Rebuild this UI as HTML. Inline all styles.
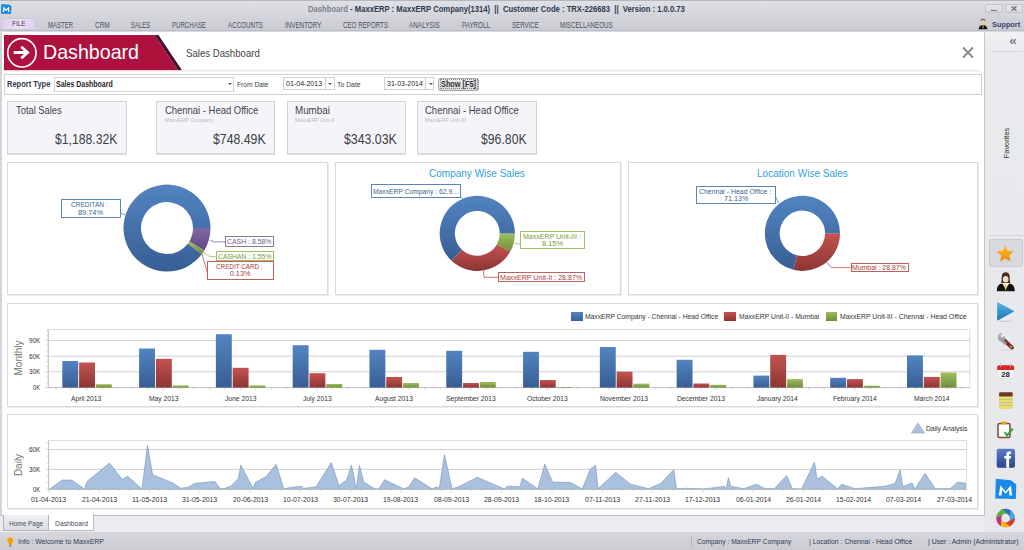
<!DOCTYPE html><html><head><meta charset="utf-8"><style>
*{margin:0;padding:0;box-sizing:border-box}
html,body{width:1024px;height:550px;overflow:hidden;background:#d4d5da;font-family:"Liberation Sans",sans-serif}
.a{position:absolute}
.nw{white-space:nowrap}
#title{left:0;top:0;width:1024px;height:17px;background:linear-gradient(#b6b7bd 0,#b6b7bd 1px,#dfe0e5 1.5px,#d3d4da 17px)}
#ribbon{left:0;top:17px;width:1024px;height:15px;background:linear-gradient(#d3d4da,#cbccd3 13px,#bdbec4 13px,#bdbec4 14px,#d9dadf 14px)}
#content{left:1.5px;top:32px;width:982.5px;height:482.5px;background:#fff;box-shadow:1px 1px 1px #c4c5ca}
#side{left:985px;top:32px;width:39px;height:500px;background:linear-gradient(#f1f1f4,#e9eaed 22px,#e7e8eb)}
#tabstrip{left:0;top:515px;width:985px;height:17px;background:linear-gradient(#bcbdc2 0,#bcbdc2 1px,#ebecef 1px)}
#status{left:0;top:532px;width:1024px;height:18px;background:linear-gradient(#d6d7dc,#cbccd2)}
.card{background:#f5f5f9;border:1px solid #d3d3d8;box-shadow:0 1px 0 #e2e2e6}
.panel{background:#fff;border:1px solid #dadadd;box-shadow:1px 1px 0 #ececef}
</style></head><body><div id="title" class="a"></div><div id="ribbon" class="a"></div><div id="content" class="a"></div><div id="side" class="a"></div><div id="tabstrip" class="a"></div><div id="status" class="a"></div><svg class="a" style="left:0;top:3px" width="13" height="12" viewBox="0 0 13 12"><path d="M1.2 1 L10 1.8 L11.6 4 L11 11 L1 10.8 Z" fill="#1e88e0"/><path d="M2.6 9 L3.6 3.4 L6.2 6.6 L8.8 3.6 L9.6 9 L8.2 9 L7.8 6.2 L6.2 8.2 L4.5 6.2 L4 9 Z" fill="#fff"/></svg><div class="a nw" style="left:307.80px;top:5px;font-size:8.43px;line-height:8.43px;color:#2e3950;font-weight:bold;transform:scaleX(0.9083);transform-origin:0 0;"><span style="color:#7b808c">Dashboard</span> - MaxxERP : MaxxERP Company(1314)&nbsp; ||&nbsp; Customer Code : TRX-226683&nbsp; ||&nbsp; Version : 1.0.0.73</div><div class="a" style="left:985px;top:4px;width:18px;height:9px;border:1px solid #c2c3c8;border-radius:2px;background:linear-gradient(#e6e7ea,#d8d9dd)"></div><div class="a" style="left:991px;top:9.5px;width:6px;height:1.3px;background:#6d7079"></div><div class="a" style="left:1005px;top:4px;width:18px;height:9px;border:1px solid #c2c3c8;border-radius:2px;background:linear-gradient(#e6e7ea,#d8d9dd)"></div><svg class="a" style="left:1011px;top:6px" width="6" height="5" viewBox="0 0 6 5"><path d="M0.5 0.3 L5.5 4.7 M5.5 0.3 L0.5 4.7" stroke="#6d7079" stroke-width="1.4"/></svg><div class="a" style="left:2px;top:17.5px;width:34px;height:12px;border:1px solid #cdc7dc;background:linear-gradient(100deg,#dcd3f0,#efdff6 50%,#ddcff0)"></div><div class="a nw" style="left:11.70px;top:20px;font-size:7.85px;line-height:7.85px;color:#3d4150;transform:scaleX(0.8150);transform-origin:0 0;">FILE</div><div class="a nw" style="left:47.80px;top:22px;font-size:8.14px;line-height:8.14px;color:#4a4f5c;transform:scaleX(0.7433);transform-origin:0 0;">MASTER</div><div class="a nw" style="left:94.60px;top:22px;font-size:8.14px;line-height:8.14px;color:#4a4f5c;transform:scaleX(0.7938);transform-origin:0 0;">CRM</div><div class="a nw" style="left:130.80px;top:22px;font-size:8.14px;line-height:8.14px;color:#4a4f5c;transform:scaleX(0.7314);transform-origin:0 0;">SALES</div><div class="a nw" style="left:171.80px;top:22px;font-size:8.14px;line-height:8.14px;color:#4a4f5c;transform:scaleX(0.7497);transform-origin:0 0;">PURCHASE</div><div class="a nw" style="left:227.70px;top:22px;font-size:8.14px;line-height:8.14px;color:#4a4f5c;transform:scaleX(0.7643);transform-origin:0 0;">ACCOUNTS</div><div class="a nw" style="left:284.60px;top:22px;font-size:8.14px;line-height:8.14px;color:#4a4f5c;transform:scaleX(0.7710);transform-origin:0 0;">INVENTORY</div><div class="a nw" style="left:342.60px;top:22px;font-size:8.14px;line-height:8.14px;color:#4a4f5c;transform:scaleX(0.7632);transform-origin:0 0;">CEO REPORTS</div><div class="a nw" style="left:409.10px;top:22px;font-size:8.14px;line-height:8.14px;color:#4a4f5c;transform:scaleX(0.7858);transform-origin:0 0;">ANALYSIS</div><div class="a nw" style="left:461.80px;top:22px;font-size:8.14px;line-height:8.14px;color:#4a4f5c;transform:scaleX(0.7676);transform-origin:0 0;">PAYROLL</div><div class="a nw" style="left:511.70px;top:22px;font-size:8.14px;line-height:8.14px;color:#4a4f5c;transform:scaleX(0.7562);transform-origin:0 0;">SERVICE</div><div class="a nw" style="left:560.00px;top:22px;font-size:8.14px;line-height:8.14px;color:#4a4f5c;transform:scaleX(0.7612);transform-origin:0 0;">MISCELLANEOUS</div><svg class="a" style="left:978px;top:18px" width="10" height="12" viewBox="0 0 10 12"><ellipse cx="5" cy="4" rx="2.2" ry="2.6" fill="#e9c9a8"/><path d="M2.6 3.2 Q5 0 7.4 3.2 L7.2 2 Q5 -0.6 2.8 2 Z" fill="#3a2418"/><path d="M0.6 11.2 Q1 7.2 5 7 Q9 7.2 9.4 11.2 Z" fill="#111"/><path d="M4.3 7.2 L5.7 7.2 L5.4 10.5 L4.6 10.5 Z" fill="#f0c020"/></svg><div class="a nw" style="left:991.60px;top:21px;font-size:7.85px;line-height:7.85px;color:#3a4766;font-weight:bold;transform:scaleX(0.9367);transform-origin:0 0;">Support</div><svg class="a" style="left:0;top:32px" width="985" height="42" viewBox="0 32 985 42"><polygon points="4,35 154.5,35 178,70.3 4,70.3" fill="#ac123d"/><polygon points="154.5,35 158.4,35 182,70.3 178,70.3" fill="#4a0b2f"/><line x1="4" y1="70.8" x2="980" y2="70.8" stroke="#dadadd" stroke-width="1"/><circle cx="21.9" cy="52.8" r="14.2" fill="none" stroke="#fff" stroke-width="1.6"/><path d="M13.7 52.5 L27 52.5 M21.3 46.8 L27.6 52.5 L21.3 58.2" fill="none" stroke="#fff" stroke-width="2.8"/><path d="M963 47.5 L973 57.5 M973 47.5 L963 57.5" stroke="#8a8a8a" stroke-width="2"/></svg><div class="a nw" style="left:43.00px;top:42px;font-size:20.93px;line-height:20.93px;color:#fff;transform:scaleX(0.9380);transform-origin:0 0;">Dashboard</div><div class="a nw" style="left:186.30px;top:48px;font-size:10.90px;line-height:10.90px;color:#444;transform:scaleX(0.8839);transform-origin:0 0;">Sales Dashboard</div><div class="a" style="left:4px;top:74px;width:978px;height:21px;border:1px solid #d2d2d6;background:#fff"></div><div class="a nw" style="left:7.40px;top:80px;font-size:8.87px;line-height:8.87px;color:#33384a;font-weight:bold;transform:scaleX(0.8495);transform-origin:0 0;">Report Type</div><div class="a" style="left:54px;top:77px;width:179.5px;height:14.5px;border:1px solid #d4d4d8;background:#fff"></div><div class="a nw" style="left:55.90px;top:80px;font-size:8.87px;line-height:8.87px;color:#1f1f1f;font-weight:bold;transform:scaleX(0.7891);transform-origin:0 0;">Sales Dashboard</div><div class="a" style="left:227.8px;top:83px;width:0;height:0;border-left:2px solid transparent;border-right:2px solid transparent;border-top:2.2px solid #555"></div><div class="a nw" style="left:236.50px;top:81px;font-size:7.41px;line-height:7.41px;color:#3a3f4c;transform:scaleX(0.8997);transform-origin:0 0;">From Date</div><div class="a" style="left:283.2px;top:77.4px;width:51.400000000000034px;height:12.4px;border:1px solid #d0d0d4;background:#fff"></div><div class="a" style="left:324.7px;top:77.4px;width:1px;height:12.4px;background:#d0d0d4"></div><div class="a" style="left:328.0px;top:83.2px;width:0;height:0;border-left:2px solid transparent;border-right:2px solid transparent;border-top:2.2px solid #555"></div><div class="a nw" style="left:285.80px;top:80px;font-size:7.70px;line-height:7.70px;color:#2a2a2a;transform:scaleX(0.9191);transform-origin:0 0;">01-04-2013</div><div class="a nw" style="left:337.30px;top:81px;font-size:7.41px;line-height:7.41px;color:#3a3f4c;transform:scaleX(0.9245);transform-origin:0 0;">To Date</div><div class="a" style="left:384.2px;top:77.4px;width:50.19999999999999px;height:12.4px;border:1px solid #d0d0d4;background:#fff"></div><div class="a" style="left:425.3px;top:77.4px;width:1px;height:12.4px;background:#d0d0d4"></div><div class="a" style="left:428.6px;top:83.2px;width:0;height:0;border-left:2px solid transparent;border-right:2px solid transparent;border-top:2.2px solid #555"></div><div class="a nw" style="left:386.60px;top:80px;font-size:7.70px;line-height:7.70px;color:#2a2a2a;transform:scaleX(0.9115);transform-origin:0 0;">31-03-2014</div><div class="a" style="left:438.3px;top:77.9px;width:41px;height:12.9px;border:1px solid #a9a9ae;border-radius:2px;background:linear-gradient(#efeff1,#d3d3d7)"></div><div class="a" style="left:439.8px;top:79.4px;width:38px;height:10px;border:1px dotted #8a8a8a"></div><div class="a nw" style="left:441.00px;top:80px;font-size:8.43px;line-height:8.43px;color:#333;font-weight:bold;transform:scaleX(0.8686);transform-origin:0 0;">Show [F5]</div><div class="a card" style="left:7px;top:101px;width:120px;height:53px"></div><div class="a nw" style="left:16.30px;top:106px;font-size:10.17px;line-height:10.17px;color:#3f434c;transform:scaleX(0.9209);transform-origin:0 0;">Total Sales</div><div class="a nw" style="left:54.50px;top:132px;font-size:14.83px;line-height:14.83px;color:#3a3e46;transform:scaleX(0.8239);transform-origin:0 0;">$1,188.32K</div><div class="a card" style="left:156px;top:101px;width:119px;height:53px"></div><div class="a nw" style="left:164.60px;top:106px;font-size:10.17px;line-height:10.17px;color:#3f434c;transform:scaleX(0.9300);transform-origin:0 0;">Chennai - Head Office</div><div class="a nw" style="left:164.60px;top:118px;font-size:5.81px;line-height:5.81px;color:#b8bbc3;transform:scaleX(0.9252);transform-origin:0 0;">MaxxERP Company</div><div class="a nw" style="left:212.90px;top:132px;font-size:14.83px;line-height:14.83px;color:#3a3e46;transform:scaleX(0.8287);transform-origin:0 0;">$748.49K</div><div class="a card" style="left:287px;top:101px;width:119px;height:53px"></div><div class="a nw" style="left:295.20px;top:106px;font-size:10.17px;line-height:10.17px;color:#3f434c;transform:scaleX(0.9653);transform-origin:0 0;">Mumbai</div><div class="a nw" style="left:295.20px;top:118px;font-size:5.81px;line-height:5.81px;color:#b8bbc3;transform:scaleX(0.9248);transform-origin:0 0;">MaxxERP Unit-II</div><div class="a nw" style="left:343.50px;top:132px;font-size:14.83px;line-height:14.83px;color:#3a3e46;transform:scaleX(0.8303);transform-origin:0 0;">$343.03K</div><div class="a card" style="left:417px;top:101px;width:120px;height:53px"></div><div class="a nw" style="left:425.40px;top:106px;font-size:10.17px;line-height:10.17px;color:#3f434c;transform:scaleX(0.9340);transform-origin:0 0;">Chennai - Head Office</div><div class="a nw" style="left:425.40px;top:118px;font-size:5.81px;line-height:5.81px;color:#b8bbc3;transform:scaleX(0.9247);transform-origin:0 0;">MaxxERP Unit-III</div><div class="a nw" style="left:481.00px;top:132px;font-size:14.83px;line-height:14.83px;color:#3a3e46;transform:scaleX(0.8255);transform-origin:0 0;">$96.80K</div><div class="a panel" style="left:7px;top:162px;width:321px;height:133px"></div><div class="a panel" style="left:335px;top:162px;width:286px;height:133px"></div><div class="a panel" style="left:628px;top:162px;width:350px;height:133px"></div><div class="a panel" style="left:7px;top:303px;width:971px;height:104px"></div><div class="a panel" style="left:7px;top:414px;width:971px;height:95px"></div><svg class="a" style="left:0;top:0" width="1024" height="550" viewBox="0 0 1024 550"><defs>
<linearGradient id="gb" x1="0" y1="0" x2="0" y2="1" gradientUnits="objectBoundingBox"><stop offset="0" stop-color="#5284c1"/><stop offset="1" stop-color="#385e94"/></linearGradient>
<linearGradient id="gr" x1="0" y1="0" x2="0" y2="1" gradientUnits="objectBoundingBox"><stop offset="0" stop-color="#c4524f"/><stop offset="1" stop-color="#8b3634"/></linearGradient>
<linearGradient id="gg" x1="0" y1="0" x2="0" y2="1" gradientUnits="objectBoundingBox"><stop offset="0" stop-color="#9dbf5b"/><stop offset="1" stop-color="#6f8c3d"/></linearGradient>
<linearGradient id="gp" x1="0" y1="0" x2="0" y2="1" gradientUnits="objectBoundingBox"><stop offset="0" stop-color="#8266a5"/><stop offset="1" stop-color="#5d4881"/></linearGradient>
</defs><path d="M210.50 228.10 A43.5 43.5 0 0 1 204.33 250.43 L189.31 241.45 A26 26 0 0 0 193.00 228.10 Z" fill="url(#gp)"/><path d="M204.33 250.43 A43.5 43.5 0 0 1 201.98 253.96 L187.91 243.55 A26 26 0 0 0 189.31 241.45 Z" fill="url(#gg)"/><path d="M201.98 253.96 A43.5 43.5 0 0 1 201.77 254.24 L187.78 243.72 A26 26 0 0 0 187.91 243.55 Z" fill="url(#gr)"/><path d="M201.77 254.24 A43.5 43.5 0 1 1 210.50 228.10 L193.00 228.10 A26 26 0 1 0 187.78 243.72 Z" fill="url(#gb)"/><path d="M514.90 233.40 A37.6 37.6 0 0 1 510.08 251.82 L496.83 244.38 A22.4 22.4 0 0 0 499.70 233.40 Z" fill="url(#gg)"/><path d="M510.08 251.82 A37.6 37.6 0 0 1 451.53 260.78 L461.95 249.71 A22.4 22.4 0 0 0 496.83 244.38 Z" fill="url(#gr)"/><path d="M451.53 260.78 A37.6 37.6 0 1 1 514.90 233.40 L499.70 233.40 A22.4 22.4 0 1 0 461.95 249.71 Z" fill="url(#gb)"/><path d="M840.00 233.30 A37.6 37.6 0 0 1 793.35 269.79 L796.93 255.33 A22.7 22.7 0 0 0 825.10 233.30 Z" fill="url(#gr)"/><path d="M793.35 269.79 A37.6 37.6 0 1 1 840.00 233.30 L825.10 233.30 A22.7 22.7 0 1 0 796.93 255.33 Z" fill="url(#gb)"/><polyline points="120.1,213 125.3,215" fill="none" stroke="#4f81bd" stroke-width="0.8"/><polyline points="210.2,240.3 214,241.9 225.4,241.9" fill="none" stroke="#8064a2" stroke-width="0.8"/><polyline points="203.1,251.7 209.6,256.6 216.2,256.6" fill="none" stroke="#9bbb59" stroke-width="0.8"/><polyline points="202,253.9 207.4,273" fill="none" stroke="#c0504d" stroke-width="0.8"/><polyline points="460.6,196.5 462.9,198.8" fill="none" stroke="#4f81bd" stroke-width="0.8"/><polyline points="514,243.3 520.2,244.2" fill="none" stroke="#9bbb59" stroke-width="0.8"/><polyline points="483.5,270.6 484,277.3 498.4,277.3" fill="none" stroke="#c0504d" stroke-width="0.8"/><polyline points="775.8,197 778.7,203.1" fill="none" stroke="#4f81bd" stroke-width="0.8"/><polyline points="825.9,261.3 831.5,267.6 850.6,267.6" fill="none" stroke="#c0504d" stroke-width="0.8"/></svg><div class="a" style="left:61.1px;top:199.4px;width:59.49999999999999px;height:18.5px;border:1px solid #5b84bc;background:#fff"></div><div class="a nw" style="left:71.40px;top:201px;font-size:6.98px;line-height:6.98px;color:#3d5f92;transform:scaleX(0.9397);transform-origin:0 0;">CREDITAN :</div><div class="a nw" style="left:77.70px;top:209px;font-size:7.27px;line-height:7.27px;color:#3d5f92;transform:scaleX(1.0144);transform-origin:0 0;">89.74%</div><div class="a" style="left:225.4px;top:236.2px;width:48.79999999999998px;height:10.800000000000011px;border:1px solid #8a78a8;background:#fff"></div><div class="a nw" style="left:227.10px;top:238px;font-size:7.27px;line-height:7.27px;color:#6a5a8a;transform:scaleX(0.9497);transform-origin:0 0;">CASH : 8.58%</div><div class="a" style="left:216.2px;top:251.2px;width:58.0px;height:10.199999999999989px;border:1px solid #9fbd64;background:#fff"></div><div class="a nw" style="left:218.10px;top:253px;font-size:7.27px;line-height:7.27px;color:#759a3a;transform:scaleX(0.9392);transform-origin:0 0;">CASHAN : 1.55%</div><div class="a" style="left:207.2px;top:261.2px;width:67.0px;height:18.400000000000034px;border:1px solid #c0605d;background:#fff"></div><div class="a nw" style="left:216.20px;top:263px;font-size:7.27px;line-height:7.27px;color:#a5403e;transform:scaleX(0.8697);transform-origin:0 0;">CREDIT CARD :</div><div class="a nw" style="left:229.80px;top:270px;font-size:7.27px;line-height:7.27px;color:#a5403e;">0.13%</div><div class="a nw" style="left:429.40px;top:168px;font-size:10.90px;line-height:10.90px;color:#33a0df;transform:scaleX(0.9194);transform-origin:0 0;">Company Wise Sales</div><div class="a" style="left:371.3px;top:184.3px;width:89.69999999999999px;height:14.0px;border:1px solid #5b84bc;background:#fff"></div><div class="a nw" style="left:372.80px;top:188px;font-size:7.56px;line-height:7.56px;color:#3d5f92;transform:scaleX(0.8912);transform-origin:0 0;">MaxxERP Company : 62.9…</div><div class="a" style="left:520.2px;top:231.2px;width:64.39999999999998px;height:18.100000000000023px;border:1px solid #9fbd64;background:#fff"></div><div class="a nw" style="left:523.00px;top:233px;font-size:7.27px;line-height:7.27px;color:#759a3a;transform:scaleX(0.9707);transform-origin:0 0;">MaxxERP Unit-III :</div><div class="a nw" style="left:541.70px;top:240px;font-size:7.27px;line-height:7.27px;color:#759a3a;transform:scaleX(1.0238);transform-origin:0 0;">8.15%</div><div class="a" style="left:498.4px;top:271.9px;width:86.20000000000005px;height:9.900000000000034px;border:1px solid #c0605d;background:#fff"></div><div class="a nw" style="left:499.70px;top:274px;font-size:7.27px;line-height:7.27px;color:#a5403e;transform:scaleX(0.9751);transform-origin:0 0;">MaxxERP Unit-II : 28.87%</div><div class="a nw" style="left:757.30px;top:168px;font-size:10.90px;line-height:10.90px;color:#33a0df;transform:scaleX(0.9205);transform-origin:0 0;">Location Wise Sales</div><div class="a" style="left:696.3px;top:185.6px;width:79.80000000000007px;height:18.30000000000001px;border:1px solid #5b84bc;background:#fff"></div><div class="a nw" style="left:699.00px;top:188px;font-size:7.27px;line-height:7.27px;color:#3d5f92;transform:scaleX(0.9535);transform-origin:0 0;">Chennai - Head Office :</div><div class="a nw" style="left:723.70px;top:195px;font-size:7.27px;line-height:7.27px;color:#3d5f92;transform:scaleX(0.9860);transform-origin:0 0;">71.13%</div><div class="a" style="left:850.6px;top:263.1px;width:58.69999999999993px;height:9.299999999999955px;border:1px solid #c0605d;background:#fff"></div><div class="a nw" style="left:852.20px;top:264px;font-size:7.27px;line-height:7.27px;color:#a5403e;transform:scaleX(0.9512);transform-origin:0 0;">Mumbai : 28.87%</div><svg class="a" style="left:0;top:0" width="1024" height="550" viewBox="0 0 1024 550"><defs>
<linearGradient id="gb" x1="0" y1="0" x2="0" y2="1"><stop offset="0" stop-color="#5284c1"/><stop offset="1" stop-color="#385e94"/></linearGradient>
<linearGradient id="gr" x1="0" y1="0" x2="0" y2="1"><stop offset="0" stop-color="#c4524f"/><stop offset="1" stop-color="#8b3634"/></linearGradient>
<linearGradient id="gg" x1="0" y1="0" x2="0" y2="1"><stop offset="0" stop-color="#9dbf5b"/><stop offset="1" stop-color="#6f8c3d"/></linearGradient>
<linearGradient id="gp" x1="0" y1="0" x2="0" y2="1"><stop offset="0" stop-color="#8266a5"/><stop offset="1" stop-color="#5d4881"/></linearGradient>
</defs><rect x="48.3" y="329.6" width="921.5" height="58.0" fill="none" stroke="#dcdcdc" stroke-width="1"/><line x1="48.3" y1="340.4" x2="969.8" y2="340.4" stroke="#cfcfcf" stroke-width="1"/><line x1="48.3" y1="356.2" x2="969.8" y2="356.2" stroke="#cfcfcf" stroke-width="1"/><line x1="48.3" y1="371.8" x2="969.8" y2="371.8" stroke="#cfcfcf" stroke-width="1"/><line x1="48.3" y1="387.6" x2="969.8" y2="387.6" stroke="#c4c4c4" stroke-width="1"/><line x1="48.3" y1="329.6" x2="48.3" y2="387.6" stroke="#c4c4c4" stroke-width="1"/><line x1="45.3" y1="387.60" x2="48.3" y2="387.60" stroke="#c8c8c8" stroke-width="0.8"/><line x1="46.3" y1="382.36" x2="48.3" y2="382.36" stroke="#c8c8c8" stroke-width="0.8"/><line x1="46.3" y1="377.11" x2="48.3" y2="377.11" stroke="#c8c8c8" stroke-width="0.8"/><line x1="45.3" y1="371.87" x2="48.3" y2="371.87" stroke="#c8c8c8" stroke-width="0.8"/><line x1="46.3" y1="366.62" x2="48.3" y2="366.62" stroke="#c8c8c8" stroke-width="0.8"/><line x1="46.3" y1="361.38" x2="48.3" y2="361.38" stroke="#c8c8c8" stroke-width="0.8"/><line x1="45.3" y1="356.13" x2="48.3" y2="356.13" stroke="#c8c8c8" stroke-width="0.8"/><line x1="46.3" y1="350.89" x2="48.3" y2="350.89" stroke="#c8c8c8" stroke-width="0.8"/><line x1="46.3" y1="345.64" x2="48.3" y2="345.64" stroke="#c8c8c8" stroke-width="0.8"/><line x1="45.3" y1="340.40" x2="48.3" y2="340.40" stroke="#c8c8c8" stroke-width="0.8"/><line x1="46.3" y1="335.16" x2="48.3" y2="335.16" stroke="#c8c8c8" stroke-width="0.8"/><line x1="46.3" y1="329.91" x2="48.3" y2="329.91" stroke="#c8c8c8" stroke-width="0.8"/><line x1="55.98" y1="387.6" x2="55.98" y2="389.6" stroke="#c8c8c8" stroke-width="0.8"/><line x1="71.34" y1="387.6" x2="71.34" y2="389.6" stroke="#c8c8c8" stroke-width="0.8"/><line x1="86.70" y1="387.6" x2="86.70" y2="390.6" stroke="#c8c8c8" stroke-width="0.8"/><line x1="102.05" y1="387.6" x2="102.05" y2="389.6" stroke="#c8c8c8" stroke-width="0.8"/><line x1="117.41" y1="387.6" x2="117.41" y2="389.6" stroke="#c8c8c8" stroke-width="0.8"/><line x1="132.77" y1="387.6" x2="132.77" y2="389.6" stroke="#c8c8c8" stroke-width="0.8"/><line x1="148.13" y1="387.6" x2="148.13" y2="389.6" stroke="#c8c8c8" stroke-width="0.8"/><line x1="163.49" y1="387.6" x2="163.49" y2="390.6" stroke="#c8c8c8" stroke-width="0.8"/><line x1="178.85" y1="387.6" x2="178.85" y2="389.6" stroke="#c8c8c8" stroke-width="0.8"/><line x1="194.20" y1="387.6" x2="194.20" y2="389.6" stroke="#c8c8c8" stroke-width="0.8"/><line x1="209.56" y1="387.6" x2="209.56" y2="389.6" stroke="#c8c8c8" stroke-width="0.8"/><line x1="224.92" y1="387.6" x2="224.92" y2="389.6" stroke="#c8c8c8" stroke-width="0.8"/><line x1="240.28" y1="387.6" x2="240.28" y2="390.6" stroke="#c8c8c8" stroke-width="0.8"/><line x1="255.64" y1="387.6" x2="255.64" y2="389.6" stroke="#c8c8c8" stroke-width="0.8"/><line x1="271.00" y1="387.6" x2="271.00" y2="389.6" stroke="#c8c8c8" stroke-width="0.8"/><line x1="286.35" y1="387.6" x2="286.35" y2="389.6" stroke="#c8c8c8" stroke-width="0.8"/><line x1="301.71" y1="387.6" x2="301.71" y2="389.6" stroke="#c8c8c8" stroke-width="0.8"/><line x1="317.07" y1="387.6" x2="317.07" y2="390.6" stroke="#c8c8c8" stroke-width="0.8"/><line x1="332.43" y1="387.6" x2="332.43" y2="389.6" stroke="#c8c8c8" stroke-width="0.8"/><line x1="347.79" y1="387.6" x2="347.79" y2="389.6" stroke="#c8c8c8" stroke-width="0.8"/><line x1="363.15" y1="387.6" x2="363.15" y2="389.6" stroke="#c8c8c8" stroke-width="0.8"/><line x1="378.50" y1="387.6" x2="378.50" y2="389.6" stroke="#c8c8c8" stroke-width="0.8"/><line x1="393.86" y1="387.6" x2="393.86" y2="390.6" stroke="#c8c8c8" stroke-width="0.8"/><line x1="409.22" y1="387.6" x2="409.22" y2="389.6" stroke="#c8c8c8" stroke-width="0.8"/><line x1="424.58" y1="387.6" x2="424.58" y2="389.6" stroke="#c8c8c8" stroke-width="0.8"/><line x1="439.94" y1="387.6" x2="439.94" y2="389.6" stroke="#c8c8c8" stroke-width="0.8"/><line x1="455.30" y1="387.6" x2="455.30" y2="389.6" stroke="#c8c8c8" stroke-width="0.8"/><line x1="470.65" y1="387.6" x2="470.65" y2="390.6" stroke="#c8c8c8" stroke-width="0.8"/><line x1="486.01" y1="387.6" x2="486.01" y2="389.6" stroke="#c8c8c8" stroke-width="0.8"/><line x1="501.37" y1="387.6" x2="501.37" y2="389.6" stroke="#c8c8c8" stroke-width="0.8"/><line x1="516.73" y1="387.6" x2="516.73" y2="389.6" stroke="#c8c8c8" stroke-width="0.8"/><line x1="532.09" y1="387.6" x2="532.09" y2="389.6" stroke="#c8c8c8" stroke-width="0.8"/><line x1="547.45" y1="387.6" x2="547.45" y2="390.6" stroke="#c8c8c8" stroke-width="0.8"/><line x1="562.80" y1="387.6" x2="562.80" y2="389.6" stroke="#c8c8c8" stroke-width="0.8"/><line x1="578.16" y1="387.6" x2="578.16" y2="389.6" stroke="#c8c8c8" stroke-width="0.8"/><line x1="593.52" y1="387.6" x2="593.52" y2="389.6" stroke="#c8c8c8" stroke-width="0.8"/><line x1="608.88" y1="387.6" x2="608.88" y2="389.6" stroke="#c8c8c8" stroke-width="0.8"/><line x1="624.24" y1="387.6" x2="624.24" y2="390.6" stroke="#c8c8c8" stroke-width="0.8"/><line x1="639.60" y1="387.6" x2="639.60" y2="389.6" stroke="#c8c8c8" stroke-width="0.8"/><line x1="654.95" y1="387.6" x2="654.95" y2="389.6" stroke="#c8c8c8" stroke-width="0.8"/><line x1="670.31" y1="387.6" x2="670.31" y2="389.6" stroke="#c8c8c8" stroke-width="0.8"/><line x1="685.67" y1="387.6" x2="685.67" y2="389.6" stroke="#c8c8c8" stroke-width="0.8"/><line x1="701.03" y1="387.6" x2="701.03" y2="390.6" stroke="#c8c8c8" stroke-width="0.8"/><line x1="716.39" y1="387.6" x2="716.39" y2="389.6" stroke="#c8c8c8" stroke-width="0.8"/><line x1="731.75" y1="387.6" x2="731.75" y2="389.6" stroke="#c8c8c8" stroke-width="0.8"/><line x1="747.10" y1="387.6" x2="747.10" y2="389.6" stroke="#c8c8c8" stroke-width="0.8"/><line x1="762.46" y1="387.6" x2="762.46" y2="389.6" stroke="#c8c8c8" stroke-width="0.8"/><line x1="777.82" y1="387.6" x2="777.82" y2="390.6" stroke="#c8c8c8" stroke-width="0.8"/><line x1="793.18" y1="387.6" x2="793.18" y2="389.6" stroke="#c8c8c8" stroke-width="0.8"/><line x1="808.54" y1="387.6" x2="808.54" y2="389.6" stroke="#c8c8c8" stroke-width="0.8"/><line x1="823.90" y1="387.6" x2="823.90" y2="389.6" stroke="#c8c8c8" stroke-width="0.8"/><line x1="839.25" y1="387.6" x2="839.25" y2="389.6" stroke="#c8c8c8" stroke-width="0.8"/><line x1="854.61" y1="387.6" x2="854.61" y2="390.6" stroke="#c8c8c8" stroke-width="0.8"/><line x1="869.97" y1="387.6" x2="869.97" y2="389.6" stroke="#c8c8c8" stroke-width="0.8"/><line x1="885.33" y1="387.6" x2="885.33" y2="389.6" stroke="#c8c8c8" stroke-width="0.8"/><line x1="900.69" y1="387.6" x2="900.69" y2="389.6" stroke="#c8c8c8" stroke-width="0.8"/><line x1="916.05" y1="387.6" x2="916.05" y2="389.6" stroke="#c8c8c8" stroke-width="0.8"/><line x1="931.40" y1="387.6" x2="931.40" y2="390.6" stroke="#c8c8c8" stroke-width="0.8"/><line x1="946.76" y1="387.6" x2="946.76" y2="389.6" stroke="#c8c8c8" stroke-width="0.8"/><line x1="962.12" y1="387.6" x2="962.12" y2="389.6" stroke="#c8c8c8" stroke-width="0.8"/><rect x="62.30" y="361" width="15.9" height="26.60" fill="url(#gb)"/><rect x="79.10" y="362.5" width="15.9" height="25.10" fill="url(#gr)"/><rect x="95.90" y="384.2" width="15.9" height="3.40" fill="url(#gg)"/><rect x="139.09" y="348.5" width="15.9" height="39.10" fill="url(#gb)"/><rect x="155.89" y="358.8" width="15.9" height="28.80" fill="url(#gr)"/><rect x="172.69" y="385.4" width="15.9" height="2.20" fill="url(#gg)"/><rect x="215.88" y="334.2" width="15.9" height="53.40" fill="url(#gb)"/><rect x="232.68" y="367.8" width="15.9" height="19.80" fill="url(#gr)"/><rect x="249.48" y="385.4" width="15.9" height="2.20" fill="url(#gg)"/><rect x="292.67" y="345.2" width="15.9" height="42.40" fill="url(#gb)"/><rect x="309.47" y="373.2" width="15.9" height="14.40" fill="url(#gr)"/><rect x="326.27" y="384" width="15.9" height="3.60" fill="url(#gg)"/><rect x="369.46" y="349.8" width="15.9" height="37.80" fill="url(#gb)"/><rect x="386.26" y="377" width="15.9" height="10.60" fill="url(#gr)"/><rect x="403.06" y="383" width="15.9" height="4.60" fill="url(#gg)"/><rect x="446.25" y="350.8" width="15.9" height="36.80" fill="url(#gb)"/><rect x="463.05" y="383" width="15.9" height="4.60" fill="url(#gr)"/><rect x="479.85" y="382" width="15.9" height="5.60" fill="url(#gg)"/><rect x="523.05" y="351.8" width="15.9" height="35.80" fill="url(#gb)"/><rect x="539.85" y="380" width="15.9" height="7.60" fill="url(#gr)"/><rect x="556.65" y="387" width="15.9" height="0.60" fill="url(#gg)"/><rect x="599.84" y="347" width="15.9" height="40.60" fill="url(#gb)"/><rect x="616.64" y="371.7" width="15.9" height="15.90" fill="url(#gr)"/><rect x="633.44" y="383.6" width="15.9" height="4.00" fill="url(#gg)"/><rect x="676.63" y="359.8" width="15.9" height="27.80" fill="url(#gb)"/><rect x="693.43" y="383.5" width="15.9" height="4.10" fill="url(#gr)"/><rect x="710.23" y="384.8" width="15.9" height="2.80" fill="url(#gg)"/><rect x="753.42" y="375.6" width="15.9" height="12.00" fill="url(#gb)"/><rect x="770.22" y="354.9" width="15.9" height="32.70" fill="url(#gr)"/><rect x="787.02" y="379.1" width="15.9" height="8.50" fill="url(#gg)"/><rect x="830.21" y="377.8" width="15.9" height="9.80" fill="url(#gb)"/><rect x="847.01" y="379.1" width="15.9" height="8.50" fill="url(#gr)"/><rect x="863.81" y="385.7" width="15.9" height="1.90" fill="url(#gg)"/><rect x="907.00" y="355.4" width="15.9" height="32.20" fill="url(#gb)"/><rect x="923.80" y="376.9" width="15.9" height="10.70" fill="url(#gr)"/><rect x="940.60" y="372.5" width="15.9" height="15.10" fill="url(#gg)"/></svg><div class="a nw" style="left:28.50px;top:337px;font-size:7.27px;line-height:7.27px;color:#333;transform:scaleX(0.8732);transform-origin:0 0;">90K</div><div class="a nw" style="left:28.50px;top:353px;font-size:7.27px;line-height:7.27px;color:#333;transform:scaleX(0.8732);transform-origin:0 0;">60K</div><div class="a nw" style="left:28.50px;top:368px;font-size:7.27px;line-height:7.27px;color:#333;transform:scaleX(0.8732);transform-origin:0 0;">30K</div><div class="a nw" style="left:32.80px;top:384px;font-size:7.27px;line-height:7.27px;color:#333;transform:scaleX(0.7860);transform-origin:0 0;">0K</div><div class="a nw" style="left:17.8px;top:358.2px;transform:translate(-50%,-50%) rotate(-90deg);font-size:10px;line-height:11px;color:#777">Monthly</div><div class="a nw" style="left:71.49px;top:395px;font-size:7.85px;line-height:7.85px;color:#333;transform:scaleX(0.8599);transform-origin:0 0;">April 2013</div><div class="a nw" style="left:148.67px;top:395px;font-size:7.85px;line-height:7.85px;color:#333;transform:scaleX(0.8599);transform-origin:0 0;">May 2013</div><div class="a nw" style="left:224.52px;top:395px;font-size:7.85px;line-height:7.85px;color:#333;transform:scaleX(0.8599);transform-origin:0 0;">June 2013</div><div class="a nw" style="left:302.63px;top:395px;font-size:7.85px;line-height:7.85px;color:#333;transform:scaleX(0.8599);transform-origin:0 0;">July 2013</div><div class="a nw" style="left:374.91px;top:395px;font-size:7.85px;line-height:7.85px;color:#333;transform:scaleX(0.8599);transform-origin:0 0;">August 2013</div><div class="a nw" style="left:445.70px;top:395px;font-size:7.85px;line-height:7.85px;color:#333;transform:scaleX(0.8599);transform-origin:0 0;">September 2013</div><div class="a nw" style="left:526.99px;top:395px;font-size:7.85px;line-height:7.85px;color:#333;transform:scaleX(0.8599);transform-origin:0 0;">October 2013</div><div class="a nw" style="left:600.22px;top:395px;font-size:7.85px;line-height:7.85px;color:#333;transform:scaleX(0.8599);transform-origin:0 0;">November 2013</div><div class="a nw" style="left:677.02px;top:395px;font-size:7.85px;line-height:7.85px;color:#333;transform:scaleX(0.8599);transform-origin:0 0;">December 2013</div><div class="a nw" style="left:757.37px;top:395px;font-size:7.85px;line-height:7.85px;color:#333;transform:scaleX(0.8599);transform-origin:0 0;">January 2014</div><div class="a nw" style="left:832.66px;top:395px;font-size:7.85px;line-height:7.85px;color:#333;transform:scaleX(0.8599);transform-origin:0 0;">February 2014</div><div class="a nw" style="left:913.58px;top:395px;font-size:7.85px;line-height:7.85px;color:#333;transform:scaleX(0.8599);transform-origin:0 0;">March 2014</div><div class="a" style="left:570.9px;top:312.2px;width:11.7px;height:8.4px;background:linear-gradient(#5385c2,#3a6096)"></div><div class="a nw" style="left:584.90px;top:313px;font-size:7.70px;line-height:7.70px;color:#333;transform:scaleX(0.8772);transform-origin:0 0;">MaxxERP Company - Chennai - Head Office</div><div class="a" style="left:724.2px;top:312.2px;width:11.7px;height:8.4px;background:linear-gradient(#c5524f,#8d3533)"></div><div class="a nw" style="left:738.70px;top:313px;font-size:7.70px;line-height:7.70px;color:#333;transform:scaleX(0.8845);transform-origin:0 0;">MaxxERP Unit-II - Mumbai</div><div class="a" style="left:825.8px;top:312.2px;width:11.2px;height:8.4px;background:linear-gradient(#9cbe5a,#6f8b3c)"></div><div class="a nw" style="left:840.00px;top:313px;font-size:7.70px;line-height:7.70px;color:#333;transform:scaleX(0.8950);transform-origin:0 0;">MaxxERP Unit-III - Chennai - Head Office</div><svg class="a" style="left:0;top:0" width="1024" height="550" viewBox="0 0 1024 550"><rect x="48.6" y="440.6" width="918.0" height="48.69999999999999" fill="none" stroke="#dcdcdc" stroke-width="1"/><line x1="48.6" y1="449.5" x2="966.6" y2="449.5" stroke="#cfcfcf" stroke-width="1"/><line x1="48.6" y1="469.4" x2="966.6" y2="469.4" stroke="#cfcfcf" stroke-width="1"/><path d="M49.5,489.3 L62.3,480.1 L71.7,480.1 L84.6,489.1 L87.2,481.3 L109.5,463.1 L122.3,479.5 L127.6,476.3 L142,488.9 L147.5,445.3 L152.6,474.8 L172.9,483 L180.5,488.3 L188.1,487.2 L195.2,483.3 L215.1,481.6 L220.4,488.9 L225,488.3 L230.9,486 L238.3,478.4 L240.9,465.2 L253.2,488.7 L255.2,482.5 L266.1,476.6 L276.1,464.3 L283.8,489.1 L290.8,487.4 L301.4,486.2 L303.7,488.3 L316,486.9 L331.3,462.5 L338.9,485.6 L346.7,480.1 L351.5,465.2 L356.4,488.9 L359.4,465.2 L363.8,481.9 L374.6,488.7 L378.7,489.1 L384.6,479.8 L404.1,489.1 L409.3,486.2 L414.6,477.8 L432.2,488.9 L436.9,486.8 L439.2,488.7 L444.5,454.7 L452.1,488.9 L460.3,486 L477.3,477.2 L504.3,488.9 L507.4,486.2 L520,486.8 L522.3,478.1 L537.8,488.9 L544.8,464.1 L552.5,482.1 L570.6,482.5 L582.3,488.9 L590.3,469.2 L595.5,465.2 L598.2,488.7 L615.7,472.3 L630.5,484.2 L648.7,488.7 L661,483.3 L673.7,469.6 L676.5,488.9 L685.6,488.3 L704.4,488.9 L717.9,487.2 L724.3,486.2 L726.1,488.9 L728.4,477.8 L730.7,486.2 L743.8,488.7 L756.7,484.2 L764.3,488.3 L774.3,488.9 L786.6,475.4 L792.2,488.7 L801.6,489.1 L814.5,462.2 L817,479.3 L822,476 L837.5,488.7 L841.9,484.2 L854.7,488.7 L885.2,486.2 L895.1,483.6 L900.2,469.9 L902.7,486.6 L912.1,483 L915,489.1 L925,473.4 L935.3,488.7 L950.2,488.7 L957.6,482.2 L965.4,483 L965.4,489.3 L49.5,489.3 Z" fill="#a9c0de" stroke="#7e9cc5" stroke-width="0.7"/><line x1="48.6" y1="489.3" x2="966.6" y2="489.3" stroke="#c4c4c4" stroke-width="1"/><line x1="48.6" y1="440.6" x2="48.6" y2="489.3" stroke="#c4c4c4" stroke-width="1"/><line x1="45.6" y1="489.30" x2="48.6" y2="489.30" stroke="#c8c8c8" stroke-width="0.8"/><line x1="46.6" y1="482.63" x2="48.6" y2="482.63" stroke="#c8c8c8" stroke-width="0.8"/><line x1="46.6" y1="475.97" x2="48.6" y2="475.97" stroke="#c8c8c8" stroke-width="0.8"/><line x1="45.6" y1="469.30" x2="48.6" y2="469.30" stroke="#c8c8c8" stroke-width="0.8"/><line x1="46.6" y1="462.63" x2="48.6" y2="462.63" stroke="#c8c8c8" stroke-width="0.8"/><line x1="46.6" y1="455.97" x2="48.6" y2="455.97" stroke="#c8c8c8" stroke-width="0.8"/><line x1="45.6" y1="449.30" x2="48.6" y2="449.30" stroke="#c8c8c8" stroke-width="0.8"/><line x1="46.6" y1="442.63" x2="48.6" y2="442.63" stroke="#c8c8c8" stroke-width="0.8"/><line x1="49.00" y1="489.3" x2="49.00" y2="492.3" stroke="#c8c8c8" stroke-width="0.8"/><line x1="59.06" y1="489.3" x2="59.06" y2="491.3" stroke="#c8c8c8" stroke-width="0.8"/><line x1="69.12" y1="489.3" x2="69.12" y2="491.3" stroke="#c8c8c8" stroke-width="0.8"/><line x1="79.18" y1="489.3" x2="79.18" y2="491.3" stroke="#c8c8c8" stroke-width="0.8"/><line x1="89.24" y1="489.3" x2="89.24" y2="491.3" stroke="#c8c8c8" stroke-width="0.8"/><line x1="99.30" y1="489.3" x2="99.30" y2="492.3" stroke="#c8c8c8" stroke-width="0.8"/><line x1="109.36" y1="489.3" x2="109.36" y2="491.3" stroke="#c8c8c8" stroke-width="0.8"/><line x1="119.42" y1="489.3" x2="119.42" y2="491.3" stroke="#c8c8c8" stroke-width="0.8"/><line x1="129.48" y1="489.3" x2="129.48" y2="491.3" stroke="#c8c8c8" stroke-width="0.8"/><line x1="139.53" y1="489.3" x2="139.53" y2="491.3" stroke="#c8c8c8" stroke-width="0.8"/><line x1="149.59" y1="489.3" x2="149.59" y2="492.3" stroke="#c8c8c8" stroke-width="0.8"/><line x1="159.65" y1="489.3" x2="159.65" y2="491.3" stroke="#c8c8c8" stroke-width="0.8"/><line x1="169.71" y1="489.3" x2="169.71" y2="491.3" stroke="#c8c8c8" stroke-width="0.8"/><line x1="179.77" y1="489.3" x2="179.77" y2="491.3" stroke="#c8c8c8" stroke-width="0.8"/><line x1="189.83" y1="489.3" x2="189.83" y2="491.3" stroke="#c8c8c8" stroke-width="0.8"/><line x1="199.89" y1="489.3" x2="199.89" y2="492.3" stroke="#c8c8c8" stroke-width="0.8"/><line x1="209.95" y1="489.3" x2="209.95" y2="491.3" stroke="#c8c8c8" stroke-width="0.8"/><line x1="220.01" y1="489.3" x2="220.01" y2="491.3" stroke="#c8c8c8" stroke-width="0.8"/><line x1="230.07" y1="489.3" x2="230.07" y2="491.3" stroke="#c8c8c8" stroke-width="0.8"/><line x1="240.13" y1="489.3" x2="240.13" y2="491.3" stroke="#c8c8c8" stroke-width="0.8"/><line x1="250.19" y1="489.3" x2="250.19" y2="492.3" stroke="#c8c8c8" stroke-width="0.8"/><line x1="260.25" y1="489.3" x2="260.25" y2="491.3" stroke="#c8c8c8" stroke-width="0.8"/><line x1="270.31" y1="489.3" x2="270.31" y2="491.3" stroke="#c8c8c8" stroke-width="0.8"/><line x1="280.37" y1="489.3" x2="280.37" y2="491.3" stroke="#c8c8c8" stroke-width="0.8"/><line x1="290.43" y1="489.3" x2="290.43" y2="491.3" stroke="#c8c8c8" stroke-width="0.8"/><line x1="300.49" y1="489.3" x2="300.49" y2="492.3" stroke="#c8c8c8" stroke-width="0.8"/><line x1="310.55" y1="489.3" x2="310.55" y2="491.3" stroke="#c8c8c8" stroke-width="0.8"/><line x1="320.61" y1="489.3" x2="320.61" y2="491.3" stroke="#c8c8c8" stroke-width="0.8"/><line x1="330.66" y1="489.3" x2="330.66" y2="491.3" stroke="#c8c8c8" stroke-width="0.8"/><line x1="340.72" y1="489.3" x2="340.72" y2="491.3" stroke="#c8c8c8" stroke-width="0.8"/><line x1="350.78" y1="489.3" x2="350.78" y2="492.3" stroke="#c8c8c8" stroke-width="0.8"/><line x1="360.84" y1="489.3" x2="360.84" y2="491.3" stroke="#c8c8c8" stroke-width="0.8"/><line x1="370.90" y1="489.3" x2="370.90" y2="491.3" stroke="#c8c8c8" stroke-width="0.8"/><line x1="380.96" y1="489.3" x2="380.96" y2="491.3" stroke="#c8c8c8" stroke-width="0.8"/><line x1="391.02" y1="489.3" x2="391.02" y2="491.3" stroke="#c8c8c8" stroke-width="0.8"/><line x1="401.08" y1="489.3" x2="401.08" y2="492.3" stroke="#c8c8c8" stroke-width="0.8"/><line x1="411.14" y1="489.3" x2="411.14" y2="491.3" stroke="#c8c8c8" stroke-width="0.8"/><line x1="421.20" y1="489.3" x2="421.20" y2="491.3" stroke="#c8c8c8" stroke-width="0.8"/><line x1="431.26" y1="489.3" x2="431.26" y2="491.3" stroke="#c8c8c8" stroke-width="0.8"/><line x1="441.32" y1="489.3" x2="441.32" y2="491.3" stroke="#c8c8c8" stroke-width="0.8"/><line x1="451.38" y1="489.3" x2="451.38" y2="492.3" stroke="#c8c8c8" stroke-width="0.8"/><line x1="461.44" y1="489.3" x2="461.44" y2="491.3" stroke="#c8c8c8" stroke-width="0.8"/><line x1="471.50" y1="489.3" x2="471.50" y2="491.3" stroke="#c8c8c8" stroke-width="0.8"/><line x1="481.56" y1="489.3" x2="481.56" y2="491.3" stroke="#c8c8c8" stroke-width="0.8"/><line x1="491.62" y1="489.3" x2="491.62" y2="491.3" stroke="#c8c8c8" stroke-width="0.8"/><line x1="501.68" y1="489.3" x2="501.68" y2="492.3" stroke="#c8c8c8" stroke-width="0.8"/><line x1="511.73" y1="489.3" x2="511.73" y2="491.3" stroke="#c8c8c8" stroke-width="0.8"/><line x1="521.79" y1="489.3" x2="521.79" y2="491.3" stroke="#c8c8c8" stroke-width="0.8"/><line x1="531.85" y1="489.3" x2="531.85" y2="491.3" stroke="#c8c8c8" stroke-width="0.8"/><line x1="541.91" y1="489.3" x2="541.91" y2="491.3" stroke="#c8c8c8" stroke-width="0.8"/><line x1="551.97" y1="489.3" x2="551.97" y2="492.3" stroke="#c8c8c8" stroke-width="0.8"/><line x1="562.03" y1="489.3" x2="562.03" y2="491.3" stroke="#c8c8c8" stroke-width="0.8"/><line x1="572.09" y1="489.3" x2="572.09" y2="491.3" stroke="#c8c8c8" stroke-width="0.8"/><line x1="582.15" y1="489.3" x2="582.15" y2="491.3" stroke="#c8c8c8" stroke-width="0.8"/><line x1="592.21" y1="489.3" x2="592.21" y2="491.3" stroke="#c8c8c8" stroke-width="0.8"/><line x1="602.27" y1="489.3" x2="602.27" y2="492.3" stroke="#c8c8c8" stroke-width="0.8"/><line x1="612.33" y1="489.3" x2="612.33" y2="491.3" stroke="#c8c8c8" stroke-width="0.8"/><line x1="622.39" y1="489.3" x2="622.39" y2="491.3" stroke="#c8c8c8" stroke-width="0.8"/><line x1="632.45" y1="489.3" x2="632.45" y2="491.3" stroke="#c8c8c8" stroke-width="0.8"/><line x1="642.51" y1="489.3" x2="642.51" y2="491.3" stroke="#c8c8c8" stroke-width="0.8"/><line x1="652.57" y1="489.3" x2="652.57" y2="492.3" stroke="#c8c8c8" stroke-width="0.8"/><line x1="662.63" y1="489.3" x2="662.63" y2="491.3" stroke="#c8c8c8" stroke-width="0.8"/><line x1="672.69" y1="489.3" x2="672.69" y2="491.3" stroke="#c8c8c8" stroke-width="0.8"/><line x1="682.75" y1="489.3" x2="682.75" y2="491.3" stroke="#c8c8c8" stroke-width="0.8"/><line x1="692.80" y1="489.3" x2="692.80" y2="491.3" stroke="#c8c8c8" stroke-width="0.8"/><line x1="702.86" y1="489.3" x2="702.86" y2="492.3" stroke="#c8c8c8" stroke-width="0.8"/><line x1="712.92" y1="489.3" x2="712.92" y2="491.3" stroke="#c8c8c8" stroke-width="0.8"/><line x1="722.98" y1="489.3" x2="722.98" y2="491.3" stroke="#c8c8c8" stroke-width="0.8"/><line x1="733.04" y1="489.3" x2="733.04" y2="491.3" stroke="#c8c8c8" stroke-width="0.8"/><line x1="743.10" y1="489.3" x2="743.10" y2="491.3" stroke="#c8c8c8" stroke-width="0.8"/><line x1="753.16" y1="489.3" x2="753.16" y2="492.3" stroke="#c8c8c8" stroke-width="0.8"/><line x1="763.22" y1="489.3" x2="763.22" y2="491.3" stroke="#c8c8c8" stroke-width="0.8"/><line x1="773.28" y1="489.3" x2="773.28" y2="491.3" stroke="#c8c8c8" stroke-width="0.8"/><line x1="783.34" y1="489.3" x2="783.34" y2="491.3" stroke="#c8c8c8" stroke-width="0.8"/><line x1="793.40" y1="489.3" x2="793.40" y2="491.3" stroke="#c8c8c8" stroke-width="0.8"/><line x1="803.46" y1="489.3" x2="803.46" y2="492.3" stroke="#c8c8c8" stroke-width="0.8"/><line x1="813.52" y1="489.3" x2="813.52" y2="491.3" stroke="#c8c8c8" stroke-width="0.8"/><line x1="823.58" y1="489.3" x2="823.58" y2="491.3" stroke="#c8c8c8" stroke-width="0.8"/><line x1="833.64" y1="489.3" x2="833.64" y2="491.3" stroke="#c8c8c8" stroke-width="0.8"/><line x1="843.70" y1="489.3" x2="843.70" y2="491.3" stroke="#c8c8c8" stroke-width="0.8"/><line x1="853.76" y1="489.3" x2="853.76" y2="492.3" stroke="#c8c8c8" stroke-width="0.8"/><line x1="863.82" y1="489.3" x2="863.82" y2="491.3" stroke="#c8c8c8" stroke-width="0.8"/><line x1="873.87" y1="489.3" x2="873.87" y2="491.3" stroke="#c8c8c8" stroke-width="0.8"/><line x1="883.93" y1="489.3" x2="883.93" y2="491.3" stroke="#c8c8c8" stroke-width="0.8"/><line x1="893.99" y1="489.3" x2="893.99" y2="491.3" stroke="#c8c8c8" stroke-width="0.8"/><line x1="904.05" y1="489.3" x2="904.05" y2="492.3" stroke="#c8c8c8" stroke-width="0.8"/><line x1="914.11" y1="489.3" x2="914.11" y2="491.3" stroke="#c8c8c8" stroke-width="0.8"/><line x1="924.17" y1="489.3" x2="924.17" y2="491.3" stroke="#c8c8c8" stroke-width="0.8"/><line x1="934.23" y1="489.3" x2="934.23" y2="491.3" stroke="#c8c8c8" stroke-width="0.8"/><line x1="944.29" y1="489.3" x2="944.29" y2="491.3" stroke="#c8c8c8" stroke-width="0.8"/><line x1="954.35" y1="489.3" x2="954.35" y2="492.3" stroke="#c8c8c8" stroke-width="0.8"/><line x1="964.41" y1="489.3" x2="964.41" y2="491.3" stroke="#c8c8c8" stroke-width="0.8"/><polygon points="911.4,433.1 917.9,422.8 924.4,433.1" fill="#a9c0de" stroke="#8fa9cf" stroke-width="0.6"/></svg><div class="a nw" style="left:926.40px;top:425px;font-size:7.99px;line-height:7.99px;color:#333;transform:scaleX(0.8418);transform-origin:0 0;">Daily Analysis</div><div class="a nw" style="left:28.60px;top:446px;font-size:7.27px;line-height:7.27px;color:#333;transform:scaleX(0.8732);transform-origin:0 0;">60K</div><div class="a nw" style="left:28.60px;top:466px;font-size:7.27px;line-height:7.27px;color:#333;transform:scaleX(0.8732);transform-origin:0 0;">30K</div><div class="a nw" style="left:32.90px;top:486px;font-size:7.27px;line-height:7.27px;color:#333;transform:scaleX(0.7860);transform-origin:0 0;">0K</div><div class="a nw" style="left:17.8px;top:464.8px;transform:translate(-50%,-50%) rotate(-90deg);font-size:10px;line-height:11px;color:#777">Daily</div><div class="a nw" style="left:31.40px;top:496px;font-size:7.85px;line-height:7.85px;color:#333;transform:scaleX(0.8767);transform-origin:0 0;">01-04-2013</div><div class="a nw" style="left:81.70px;top:496px;font-size:7.85px;line-height:7.85px;color:#333;transform:scaleX(0.8767);transform-origin:0 0;">21-04-2013</div><div class="a nw" style="left:131.99px;top:496px;font-size:7.85px;line-height:7.85px;color:#333;transform:scaleX(0.8897);transform-origin:0 0;">11-05-2013</div><div class="a nw" style="left:182.29px;top:496px;font-size:7.85px;line-height:7.85px;color:#333;transform:scaleX(0.8767);transform-origin:0 0;">31-05-2013</div><div class="a nw" style="left:232.59px;top:496px;font-size:7.85px;line-height:7.85px;color:#333;transform:scaleX(0.8767);transform-origin:0 0;">20-06-2013</div><div class="a nw" style="left:282.89px;top:496px;font-size:7.85px;line-height:7.85px;color:#333;transform:scaleX(0.8767);transform-origin:0 0;">10-07-2013</div><div class="a nw" style="left:333.18px;top:496px;font-size:7.85px;line-height:7.85px;color:#333;transform:scaleX(0.8767);transform-origin:0 0;">30-07-2013</div><div class="a nw" style="left:383.48px;top:496px;font-size:7.85px;line-height:7.85px;color:#333;transform:scaleX(0.8767);transform-origin:0 0;">19-08-2013</div><div class="a nw" style="left:433.78px;top:496px;font-size:7.85px;line-height:7.85px;color:#333;transform:scaleX(0.8767);transform-origin:0 0;">08-09-2013</div><div class="a nw" style="left:484.07px;top:496px;font-size:7.85px;line-height:7.85px;color:#333;transform:scaleX(0.8767);transform-origin:0 0;">28-09-2013</div><div class="a nw" style="left:534.37px;top:496px;font-size:7.85px;line-height:7.85px;color:#333;transform:scaleX(0.8767);transform-origin:0 0;">18-10-2013</div><div class="a nw" style="left:584.67px;top:496px;font-size:7.85px;line-height:7.85px;color:#333;transform:scaleX(0.8897);transform-origin:0 0;">07-11-2013</div><div class="a nw" style="left:634.97px;top:496px;font-size:7.85px;line-height:7.85px;color:#333;transform:scaleX(0.8897);transform-origin:0 0;">27-11-2013</div><div class="a nw" style="left:685.26px;top:496px;font-size:7.85px;line-height:7.85px;color:#333;transform:scaleX(0.8767);transform-origin:0 0;">17-12-2013</div><div class="a nw" style="left:735.56px;top:496px;font-size:7.85px;line-height:7.85px;color:#333;transform:scaleX(0.8767);transform-origin:0 0;">06-01-2014</div><div class="a nw" style="left:785.86px;top:496px;font-size:7.85px;line-height:7.85px;color:#333;transform:scaleX(0.8767);transform-origin:0 0;">26-01-2014</div><div class="a nw" style="left:836.16px;top:496px;font-size:7.85px;line-height:7.85px;color:#333;transform:scaleX(0.8767);transform-origin:0 0;">15-02-2014</div><div class="a nw" style="left:886.45px;top:496px;font-size:7.85px;line-height:7.85px;color:#333;transform:scaleX(0.8767);transform-origin:0 0;">07-03-2014</div><div class="a nw" style="left:936.75px;top:496px;font-size:7.85px;line-height:7.85px;color:#333;transform:scaleX(0.8767);transform-origin:0 0;">27-03-2014</div><svg class="a" style="left:1009px;top:38px" width="8" height="7" viewBox="0 0 8 7"><path d="M3.6 1.2 L1.6 3.5 L3.6 5.8 M6.6 1.2 L4.6 3.5 L6.6 5.8" fill="none" stroke="#6a6d76" stroke-width="1.3"/></svg><div class="a" style="left:990px;top:50.5px;width:33px;height:1px;background:linear-gradient(90deg,#e3e4e8,#d0d1d5 30%,#d0d1d5 70%,#e3e4e8)"></div><div class="a nw" style="left:1006.6px;top:143px;transform:translate(-50%,-50%) rotate(-90deg);font-size:7.4px;line-height:8px;color:#333">Favorites</div><div class="a" style="left:990px;top:235px;width:34px;height:1px;background:#d3d4d8"></div><div class="a" style="left:989px;top:239px;width:34px;height:28px;background:#d9dade;border:1px solid #cacbd0;border-radius:2px"></div><svg class="a" style="left:0;top:0" width="1024" height="550" viewBox="0 0 1024 550"><defs><linearGradient id="st" x1="0" y1="0" x2="0" y2="1"><stop offset="0" stop-color="#fbc02a"/><stop offset="1" stop-color="#ef8a05"/></linearGradient><linearGradient id="pl" x1="0" y1="0" x2="0" y2="1"><stop offset="0" stop-color="#58b6e6"/><stop offset="1" stop-color="#1b73b3"/></linearGradient><linearGradient id="fb" x1="0" y1="0" x2="0" y2="1"><stop offset="0" stop-color="#5b7cc4"/><stop offset="1" stop-color="#2b4590"/></linearGradient></defs><polygon points="1005.30,245.20 1007.77,250.80 1013.86,251.42 1009.29,255.50 1010.59,261.48 1005.30,258.40 1000.01,261.48 1001.31,255.50 996.74,251.42 1002.83,250.80" fill="url(#st)"/><ellipse cx="1005.5" cy="261" rx="6" ry="0.8" fill="#c8c8cc" opacity="0.6"/><path d="M996.8 291.2 Q996.6 285 1001.5 283.6 L1005.7 286 L1009.9 283.6 Q1014.8 285 1014.8 291.2 Z" fill="#121212"/><path d="M1002.6 283.4 L1005.7 289.6 L1008.8 283.4 Z" fill="#f4f4f4"/><path d="M1005 284.6 L1006.4 284.6 L1006.2 289.8 L1005.2 289.8 Z" fill="#f2c21a"/><path d="M1001.6 279.5 Q1001 272 1005.7 272.2 Q1010.4 272 1009.8 279.5 L1010.2 283 L1001.2 283 Z" fill="#4a2c1c"/><ellipse cx="1005.7" cy="279.2" rx="2.8" ry="3.3" fill="#f3dcc6"/><path d="M1002.8 277 Q1005.7 273.2 1008.6 277 L1008.6 275 Q1005.7 272.5 1002.8 275 Z" fill="#4a2c1c"/><ellipse cx="1005.7" cy="291.4" rx="8" ry="0.6" fill="#bbb" opacity="0.5"/><path d="M997.2 302 L1014.5 311.3 L997.2 320.8 Z" fill="url(#pl)"/><ellipse cx="1005.5" cy="321.2" rx="7" ry="0.8" fill="#bbb" opacity="0.6"/><path d="M1004.5 340.5 L1012 347.6" stroke="#7b3526" stroke-width="3.8" stroke-linecap="round"/><circle cx="1011" cy="346.7" r="0.8" fill="#e8e8e8"/><path d="M998.6 334.6 Q999.6 332.6 1002.4 333.2 L1000.4 335.8 L1001.8 337.6 L1004.6 336 Q1005.6 339.4 1003.4 341.2 Q1000.4 342.6 998.2 340 Q997 337.2 998.6 334.6 Z" fill="#a9a9ad"/><path d="M1001.8 340.2 L1005.8 344" stroke="#9b9b9f" stroke-width="3"/><ellipse cx="1006" cy="350" rx="6" ry="0.7" fill="#ccc" opacity="0.6"/><rect x="997.2" y="365.5" width="16.8" height="13" rx="1.5" fill="#f4f4f4" stroke="#ccc" stroke-width="0.4"/><path d="M997.2 370 L997.2 367 Q997.2 365.3 999 365.3 L1012.2 365.3 Q1014 365.3 1014 367 L1014 370 Z" fill="#d8262b"/><rect x="1000" y="363.2" width="1" height="3.5" fill="#bbb"/><rect x="1010" y="363.2" width="1" height="3.5" fill="#bbb"/><text x="1005.6" y="377.4" text-anchor="middle" font-family="Liberation Sans" font-weight="bold" font-size="7.6" fill="#222">28</text><rect x="999" y="394.5" width="13.7" height="14.5" rx="1.2" fill="#f5da6b"/><rect x="999" y="392.3" width="13.7" height="4.2" rx="1.2" fill="#6b3a26"/><rect x="999" y="399.2" width="13.7" height="0.9" fill="#9cc9a9"/><rect x="999" y="402.2" width="13.7" height="0.9" fill="#9cc9a9"/><rect x="999" y="405.2" width="13.7" height="0.9" fill="#9cc9a9"/><rect x="998" y="423.5" width="12" height="14" rx="1.5" fill="#fff" stroke="#7a4a32" stroke-width="1.5"/><rect x="1001.5" y="421.5" width="5" height="3" rx="0.8" fill="#f0a020"/><path d="M1004.5 432 L1007 435.5 L1012.8 428.5" fill="none" stroke="#3aa04a" stroke-width="2"/><rect x="996.7" y="448.8" width="18.3" height="19" rx="2" fill="url(#fb)"/><path d="M1006.3 467.8 L1006.3 458.5 L1004.4 458.5 L1004.4 456 L1006.3 456 L1006.3 454.5 Q1006.3 451.2 1009.8 451.5 L1011 451.6 L1011 454 L1010 454 Q1009.1 454 1009.1 455 L1009.1 456 L1011.1 456 L1010.8 458.5 L1009.1 458.5 L1009.1 467.8 Z" fill="#fff"/><path d="M995.8 478.7 L1011 480.2 L1016.3 484.5 L1015.8 499 L995.3 498.6 Z" fill="#1a8ae6"/><path d="M998.8 495.5 L1000.4 485.3 L1005.6 491.6 L1010.8 485.5 L1012.2 495.5 L1009.5 495.5 L1009 489.8 L1005.6 493.8 L1002.1 489.8 L1001.5 495.5 Z" fill="#fff"/><polygon points="1000.95,510.05 1001.82,509.60 1002.73,509.26 1003.67,509.00 1004.63,508.85 1005.60,508.80 1006.57,508.85 1007.53,509.00 1008.47,509.26 1009.38,509.60 1010.25,510.05 1011.07,510.58 1011.82,511.19 1009.84,518.59 1009.90,518.20 1009.92,517.80 1009.90,517.40 1009.84,517.01 1009.73,516.63 1009.59,516.25 1009.41,515.90 1009.19,515.57 1008.94,515.26 1008.66,514.98 1008.35,514.73 1008.02,514.51" fill="#2f6fc4"/><polygon points="1010.25,510.05 1011.07,510.58 1011.82,511.19 1012.51,511.88 1013.12,512.63 1013.65,513.45 1014.10,514.32 1014.44,515.23 1014.70,516.17 1014.85,517.13 1014.90,518.10 1014.85,519.07 1014.70,520.03 1007.29,522.01 1007.67,521.87 1008.02,521.69 1008.35,521.47 1008.66,521.22 1008.94,520.94 1009.19,520.63 1009.41,520.30 1009.59,519.95 1009.73,519.57 1009.84,519.19 1009.90,518.80 1009.92,518.40" fill="#45a6e4"/><polygon points="1014.90,518.10 1014.85,519.07 1014.70,520.03 1014.44,520.97 1014.10,521.88 1013.65,522.75 1013.12,523.57 1012.51,524.32 1011.82,525.01 1011.07,525.62 1010.25,526.15 1009.38,526.60 1008.47,526.94 1003.06,521.52 1003.37,521.77 1003.70,521.99 1004.05,522.17 1004.43,522.31 1004.81,522.42 1005.20,522.48 1005.60,522.50 1006.00,522.48 1006.39,522.42 1006.77,522.31 1007.15,522.17 1007.50,521.99" fill="#e0362e"/><polygon points="1010.25,526.15 1009.38,526.60 1008.47,526.94 1007.53,527.20 1006.57,527.35 1005.60,527.40 1004.63,527.35 1003.67,527.20 1002.73,526.94 1001.82,526.60 1000.95,526.15 1000.13,525.62 999.38,525.01 1001.36,517.61 1001.30,518.00 1001.28,518.40 1001.30,518.80 1001.36,519.19 1001.47,519.57 1001.61,519.95 1001.79,520.30 1002.01,520.63 1002.26,520.94 1002.54,521.22 1002.85,521.47 1003.18,521.69" fill="#f5b41c"/><polygon points="1000.95,526.15 1000.13,525.62 999.38,525.01 998.69,524.32 998.08,523.57 997.55,522.75 997.10,521.88 996.76,520.97 996.50,520.03 996.35,519.07 996.30,518.10 996.35,517.13 996.50,516.17 1003.91,514.19 1003.53,514.33 1003.18,514.51 1002.85,514.73 1002.54,514.98 1002.26,515.26 1002.01,515.57 1001.79,515.90 1001.61,516.25 1001.47,516.63 1001.36,517.01 1001.30,517.40 1001.28,517.80" fill="#c42a8c"/><polygon points="996.30,518.10 996.35,517.13 996.50,516.17 996.76,515.23 997.10,514.32 997.55,513.45 998.08,512.63 998.69,511.88 999.38,511.19 1000.13,510.58 1000.95,510.05 1001.82,509.60 1002.73,509.26 1008.14,514.68 1007.83,514.43 1007.50,514.21 1007.15,514.03 1006.77,513.89 1006.39,513.78 1006.00,513.72 1005.60,513.70 1005.20,513.72 1004.81,513.78 1004.43,513.89 1004.05,514.03 1003.70,514.21" fill="#5cb042"/></svg><div class="a" style="left:3.2px;top:515.3px;width:45.7px;height:15.3px;border:1px solid #b4b6bc;border-top:none;background:linear-gradient(#eff0f3,#dcdde1)"></div><div class="a" style="left:48.9px;top:514px;width:45.6px;height:17.4px;border:1px solid #b9bbc1;border-top:none;border-left:none;background:#fff"></div><div class="a nw" style="left:8.80px;top:520px;font-size:7.70px;line-height:7.70px;color:#464b5a;transform:scaleX(0.8412);transform-origin:0 0;">Home Page</div><div class="a nw" style="left:54.80px;top:520px;font-size:7.70px;line-height:7.70px;color:#464b5a;transform:scaleX(0.8791);transform-origin:0 0;">Dashboard</div><svg class="a" style="left:6px;top:537px" width="9" height="10" viewBox="0 0 9 10"><circle cx="4.2" cy="3.6" r="3" fill="#f5a30d"/><path d="M2.8 6 L5.6 6 L5 8.6 L3.4 8.6 Z" fill="#ef9a00"/><rect x="3.2" y="8.4" width="2" height="1" fill="#666"/></svg><div class="a nw" style="left:18.30px;top:538px;font-size:7.70px;line-height:7.70px;color:#2f3a52;transform:scaleX(0.8935);transform-origin:0 0;">Info : Welcome to MaxxERP</div><div class="a" style="left:691.3px;top:535.5px;width:1px;height:11.5px;background:#b4b5ba"></div><div class="a nw" style="left:697.30px;top:538px;font-size:7.99px;line-height:7.99px;color:#2f3a52;transform:scaleX(0.8370);transform-origin:0 0;">Company : MaxxERP Company</div><div class="a nw" style="left:808.50px;top:538px;font-size:7.99px;line-height:7.99px;color:#2f3a52;transform:scaleX(0.8602);transform-origin:0 0;">| Location : Chennai - Head Office</div><div class="a nw" style="left:927.60px;top:538px;font-size:7.99px;line-height:7.99px;color:#2f3a52;transform:scaleX(0.8669);transform-origin:0 0;">| User : Admin (Administrator)</div></body></html>
